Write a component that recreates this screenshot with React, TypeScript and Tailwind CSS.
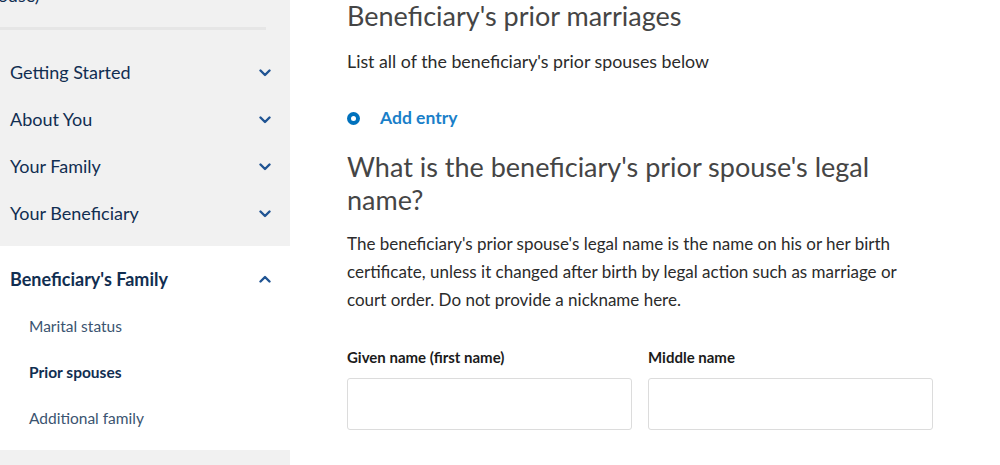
import React from "react";

const font = { fontFamily: "Lato, 'Liberation Sans', sans-serif" };

function Chevron({ up = false }: { up?: boolean }) {
  return (
    <svg width="12" height="8" viewBox="0 0 12 8" className={up ? "rotate-180" : ""}>
      <polyline points="1.5,1.5 6,6 10.5,1.5" fill="none" stroke="#205493" strokeWidth="2.4" strokeLinecap="round" strokeLinejoin="round" />
    </svg>
  );
}

const topItems = ["Getting Started", "About You", "Your Family", "Your Beneficiary"];

const subItems = [
  { label: "Marital status", active: false },
  { label: "Prior spouses", active: true },
  { label: "Additional family", active: false },
];

export default function App() {
  return (
    <div className="flex w-[1000px] h-[465px] overflow-hidden bg-white" style={font}>
      <aside className="w-[290px] shrink-0 bg-[#f1f1f1] flex flex-col">
        <div className="h-[5px] overflow-hidden">
          <div className="-mt-[15px] -ml-[22px] text-[18px] leading-[20px] text-[#112e51]">Spouse)</div>
        </div>
        <div className="mt-[22px] h-[3px] w-[266px] bg-[#e6e6e6]" />
        <ul className="mt-[19px] pb-[9px]">
          {topItems.map((t) => (
            <li key={t} className="h-[47px] flex items-center justify-between pl-[10px] pr-[19px]">
              <span className="text-[18px] text-[#112e51]">{t}</span>
              <Chevron />
            </li>
          ))}
        </ul>
        <div className="bg-white pt-[10px] pb-[8px]">
          <div className="h-[46px] flex items-center justify-between pl-[10px] pr-[19px]">
            <span className="text-[18px] font-bold text-[#112e51]">Beneficiary's Family</span>
            <Chevron up />
          </div>
          <div className="mt-[2px]">
            {subItems.map((s) => (
              <div key={s.label} className="h-[46px] flex items-center pl-[29px]">
                <span className={s.active ? "text-[15.5px] font-bold text-[#112e51]" : "text-[15.5px] text-[#3b5470]"}>
                  {s.label}
                </span>
              </div>
            ))}
          </div>
        </div>
        <div className="flex-1" />
      </aside>

      <main className="pl-[57px] w-[643px] text-[#2b2b2b]">
        <h1 className="mt-[1px] text-[27px] leading-[30px] text-[#454545]">Beneficiary's prior marriages</h1>
        <p className="mt-[16px] text-[17.8px] leading-[28px]">List all of the beneficiary's prior spouses below</p>
        <button className="mt-[30px] flex items-center gap-[20px]">
          <span className="w-[13px] h-[13px] rounded-full bg-[#0071bc] flex items-center justify-center">
            <span className="w-[5px] h-[5px] rounded-full bg-white" />
          </span>
          <span className="text-[17.5px] font-bold text-[#1a7fc9]">Add entry</span>
        </button>
        <h2 className="mt-[19px] text-[27px] leading-[33px] text-[#454545] w-[560px]">
          What is the beneficiary's prior spouse's legal name?
        </h2>
        <p className="mt-[14px] text-[17px] leading-[28px] w-[586px]">
          The beneficiary's prior spouse's legal name is the name on his or her birth certificate, unless it changed after birth by legal action such as marriage or court order. Do not provide a nickname here.
        </p>
        <div className="mt-[31px] flex gap-[16px]">
          <label className="flex flex-col w-[285px]">
            <span className="text-[15px] font-bold text-[#1b1b1b] leading-[24px]">Given name (first name)</span>
            <input className="mt-[9px] h-[52px] border border-[#dcdcdc] rounded-[3px]" />
          </label>
          <label className="flex flex-col w-[285px]">
            <span className="text-[15px] font-bold text-[#1b1b1b] leading-[24px]">Middle name</span>
            <input className="mt-[9px] h-[52px] border border-[#dcdcdc] rounded-[3px]" />
          </label>
        </div>
      </main>
    </div>
  );
}
